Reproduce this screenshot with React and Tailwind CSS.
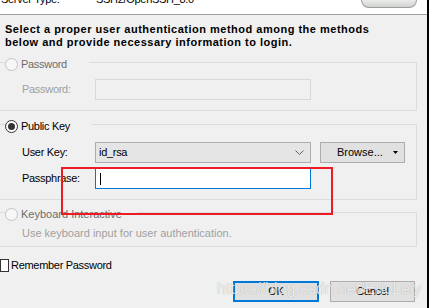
import React from "react";

function Radio({ checked, disabled }) {
  if (disabled) {
    return <span className="w-[13px] h-[13px] rounded-full border border-[#c4c4c4] bg-[#f7f7f7] shrink-0" />;
  }
  return (
    <span className="w-[13px] h-[13px] rounded-full border border-[#333333] bg-white shrink-0 flex items-center justify-center">
      {checked && <span className="w-[7px] h-[7px] rounded-full bg-[#333333]" />}
    </span>
  );
}

function Group({ label, checked, disabled, legendClass, labelClass = "", className, children }) {
  return (
    <fieldset className={`-ml-[2px] w-[419px] border border-[#dcdcdc] pl-[6px] ${className}`}>
      <legend className={`flex items-start pt-[4px] h-[17px] ${legendClass}`}>
        <Radio checked={checked} disabled={disabled} />
        <span className={`ml-[3px] leading-[13px] ${disabled ? "text-[#6d6d6d]" : "text-black"} ${labelClass}`}>{label}</span>
      </legend>
      {children}
    </fieldset>
  );
}

export default function App() {
  return (
    <div className="flex w-[429px] h-[308px] overflow-hidden">
      <div className="relative w-[427px] bg-[#f0f0f0] flex flex-col font-['Liberation_Sans',Arial,sans-serif] text-[11px] tracking-[-0.3px] text-black">
        {/* top strip, mostly scrolled off */}
        <div className="h-[15px] shrink-0 bg-white border-b border-[#a0a0a0] flex overflow-hidden">
          <span className="w-[96px] pl-[1px] -mt-[7px] leading-[13px]">Server Type:</span>
          <span className="-mt-[7px] leading-[13px]">SSH2/OpenSSH_8.0</span>
          <div className="ml-auto mr-[10px] w-[56px] h-[8px] rounded-b-[9px] border border-t-0 border-[#9c9c9c] bg-gradient-to-b from-[#ececec] to-[#cfd3cf]" />
        </div>

        <p className="mt-[8px] ml-[5px] font-bold leading-[13px] tracking-[0.5px]">
          Select a proper user authentication method among the methods
          <br />
          below and provide necessary information to login.
        </p>

        <Group label="Password" disabled legendClass="w-[84px]" className="mt-[5px] pb-[10px]">
          <div className="flex items-center ml-[17px] mt-[8px]">
            <span className="w-[73px] leading-[13px] text-[#a0a0a0]">Password:</span>
            <div className="w-[216px] h-[21px] border border-[#d9d9d9] bg-[#f0f0f0]" />
          </div>
        </Group>

        <Group label="Public Key" checked legendClass="w-[87px]" className="mt-[5px] pb-[10px]">
          <div className="flex items-center ml-[17px] mt-[9px]">
            <span className="w-[73px] leading-[13px]">User Key:</span>
            <div className="w-[216px] h-[21px] border border-[#adadad] bg-[#e5e5e5] flex items-center pl-[3px] pr-[6px]">
              <span className="leading-[13px]">id_rsa</span>
              <svg className="ml-auto" width="9" height="5" viewBox="0 0 9 5" fill="none">
                <path d="M0.5 0.5 L4.5 4.5 L8.5 0.5" stroke="#606060" strokeWidth="1" />
              </svg>
            </div>
            <div className="ml-[9px] w-[85px] h-[21px] border border-[#adadad] bg-[#e1e1e1] flex items-center pl-[16px]">
              <span className="leading-[13px] tracking-normal">Browse...</span>
              <svg className="ml-[10px]" width="5" height="3" viewBox="0 0 5 3">
                <path d="M0 0 H5 L2.5 3 Z" fill="#000" />
              </svg>
            </div>
          </div>
          <div className="flex items-center ml-[17px] mt-[5px]">
            <span className="w-[73px] leading-[13px]">Passphrase:</span>
            <div className="w-[216px] h-[21px] border border-[#0078d7] bg-white flex items-center pl-[4px]">
              <span className="w-[1px] h-[12px] bg-black" />
            </div>
          </div>
        </Group>

        <Group label="Keyboard Interactive" disabled legendClass="w-[132px]" labelClass="tracking-normal" className="mt-[4px] pb-[6px]">
          <p className="ml-[17px] mt-[6px] leading-[13px] tracking-normal text-[#a0a0a0]">Use keyboard input for user authentication.</p>
        </Group>

        <div className="flex items-center mt-[12px] h-[13px]">
          <span className="w-[9px] h-[13px] border border-[#333333] bg-white" />
          <span className="ml-[2px] leading-[13px]">Remember Password</span>
        </div>

        <div className="flex justify-end gap-[11px] mt-[9px] pr-[12px]">
          <button className="w-[86px] h-[21px] border-2 border-[#0078d7] bg-[#e1e1e1] leading-[13px]">OK</button>
          <button className="w-[85px] h-[21px] border border-[#adadad] bg-[#e1e1e1] leading-[13px]">Cancel</button>
        </div>

        {/* annotation box */}
        <div className="absolute left-[61px] top-[167px] w-[272px] h-[48px] border-2 border-[#ed1c24]" />

        {/* watermark */}
        <span className="absolute left-[217px] top-[280px] text-[16px] leading-[18px] tracking-normal text-white/80 [text-shadow:0_0_1px_rgba(0,0,0,0.35)]">
          https://blog.csdn.net/EricLeiy
        </span>
      </div>
      <div className="flex-1 bg-black" />
    </div>
  );
}
